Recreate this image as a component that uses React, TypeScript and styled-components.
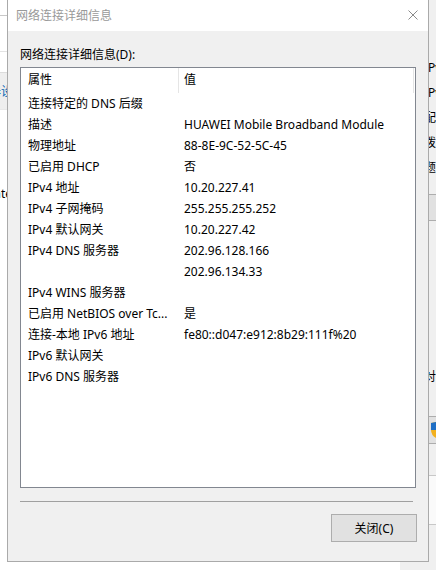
import React from "react";
import styled, { createGlobalStyle } from "styled-components";

const Global = createGlobalStyle`
  html, body { margin: 0; padding: 0; background: #ffffff; }
  body { font-family: "Noto Sans", "Noto Sans CJK SC", sans-serif; font-size: 12px; color: #000; }
`;

const Desktop = styled.div`
  position: relative;
  width: 436px;
  height: 570px;
  overflow: hidden;
  background: #ffffff;
  padding-left: 7px;
  box-sizing: border-box;
`;

/* ---------- background windows (desktop canvas) ---------- */
const LeftWindow = styled.div`
  position: absolute;
  left: -300px;
  top: 0;
  width: 310px;
  height: 570px;
  background: #ffffff;
  display: flex;
  flex-direction: column;
  z-index: 0;
`;

const LwBar = styled.div<{ $h: number; $line: string; $bg?: string }>`
  height: ${(p) => p.$h}px;
  border-bottom: 1px solid ${(p) => p.$line};
  background: ${(p) => p.$bg || "transparent"};
  display: flex;
  align-items: center;
  justify-content: flex-end;
  flex: none;
`;

const LwNav = styled.span`
  color: #0063b1;
  margin-right: -3px;
`;

const LwText = styled.div`
  margin-top: 76px;
  text-align: right;
  margin-right: -2px;
  line-height: 16px;
`;

const RightWindow = styled.div`
  position: absolute;
  left: 400px;
  top: 0;
  width: 200px;
  height: 570px;
  background: #f0f0f0;
  display: flex;
  flex-direction: column;
  padding-top: 60px;
  box-sizing: border-box;
  z-index: 0;
`;

const RwLine = styled.div<{ $mt?: number }>`
  margin-top: ${(p) => p.$mt || 0}px;
  height: 25px;
  line-height: 16px;
  padding-left: 24px;
  white-space: nowrap;
  flex: none;
`;

const RwButton = styled.div<{ $h: number; $mt: number }>`
  margin-top: ${(p) => p.$mt}px;
  height: ${(p) => p.$h}px;
  margin-left: 28px;
  background: #e1e1e1;
  border: 1px solid #adadad;
  display: flex;
  align-items: center;
  padding-left: 2px;
  flex: none;
`;

const RwBox = styled.div`
  margin-top: 31px;
  margin-left: 28px;
  height: 48px;
  background: #fafafa;
  border-top: 1px solid #c8c8c8;
  border-bottom: 1px solid #c8c8c8;
  flex: none;
`;

/* ---------- dialog ---------- */
const Dialog = styled.div`
  position: relative;
  z-index: 1;
  width: 422px;
  height: 562px;
  box-sizing: border-box;
  border: 1px solid #aaaaaa;
  border-top: none;
  background: #f0f0f0;
  display: flex;
  flex-direction: column;
`;

const TitleBar = styled.div`
  height: 31px;
  background: #ffffff;
  display: flex;
  align-items: center;
  justify-content: space-between;
  padding: 0 10px 0 8px;
  flex: none;
`;

const Title = styled.div`
  color: #999999;
  font-size: 12px;
  line-height: 16px;
`;

const CloseX = styled.div`
  width: 10px;
  height: 10px;
  display: flex;
  margin-top: -1px;
`;

const Body = styled.div`
  flex: 1;
  display: flex;
  flex-direction: column;
  padding: 16px 11px 19px 12px;
`;

const Label = styled.div`
  line-height: 16px;
  height: 16px;
  margin-bottom: 4px;
`;

const ListBox = styled.div`
  width: 396px;
  height: 421px;
  box-sizing: border-box;
  border: 1px solid #828790;
  background: #ffffff;
  display: flex;
  flex-direction: column;
  flex: none;
`;

const HeaderRow = styled.div`
  height: 25px;
  display: flex;
  flex: none;
`;

const HeaderCell = styled.div<{ $w: number; $pad: number }>`
  width: ${(p) => p.$w}px;
  padding-left: ${(p) => p.$pad}px;
  box-sizing: border-box;
  border-right: 1px solid #e5e5e5;
  line-height: 24px;
  flex: none;
`;

const Row = styled.div`
  height: 21px;
  display: flex;
  flex: none;
`;

const Cell = styled.div<{ $w?: number; $pad: number }>`
  ${(p) => (p.$w ? `width: ${p.$w}px; flex: none;` : "flex: 1;")}
  padding-left: ${(p) => p.$pad}px;
  box-sizing: border-box;
  line-height: 21px;
  white-space: nowrap;
  overflow: hidden;
`;

const Separator = styled.div`
  margin-top: 13px;
  width: 393px;
  height: 0;
  border-top: 1px solid #a0a0a0;
  flex: none;
`;

const Footer = styled.div`
  margin-top: 12px;
  display: flex;
  justify-content: flex-end;
`;

const Button = styled.button`
  width: 86px;
  height: 28px;
  box-sizing: border-box;
  background: #e1e1e1;
  border: 1px solid #adadad;
  font-family: inherit;
  font-size: 12px;
  color: #000;
  padding: 0;
  margin: 0;
`;

const rows: [string, string][] = [
  ["连接特定的 DNS 后缀", ""],
  ["描述", "HUAWEI Mobile Broadband Module"],
  ["物理地址", "88-8E-9C-52-5C-45"],
  ["已启用 DHCP", "否"],
  ["IPv4 地址", "10.20.227.41"],
  ["IPv4 子网掩码", "255.255.255.252"],
  ["IPv4 默认网关", "10.20.227.42"],
  ["IPv4 DNS 服务器", "202.96.128.166"],
  ["", "202.96.134.33"],
  ["IPv4 WINS 服务器", ""],
  ["已启用 NetBIOS over Tc...", "是"],
  ["连接-本地 IPv6 地址", "fe80::d047:e912:8b29:111f%20"],
  ["IPv6 默认网关", ""],
  ["IPv6 DNS 服务器", ""],
];

export default function App() {
  return (
    <>
      <Global />
      <Desktop>
        <LeftWindow>
          <LwBar $h={15} $line="#c8c8c8" />
          <LwBar $h={35} $line="#e3e3e3" />
          <LwBar $h={20} $line="#dcdcdc" />
          <LwBar $h={36} $line="#e8e8e8" $bg="#eeeeee">
            <LwNav>更改适配器设</LwNav>
          </LwBar>
          <LwText>Ethernet Inte</LwText>
        </LeftWindow>

        <RightWindow>
          <RwLine>IPv4 连接</RwLine>
          <RwLine>IPv6 连接</RwLine>
          <RwLine>配置</RwLine>
          <RwLine>拨号</RwLine>
          <RwLine>题</RwLine>
          <RwButton $h={25} $mt={9} />
          <RwLine $mt={148}>对</RwLine>
          <RwButton $h={26} $mt={22}>
            <svg width="10" height="16" viewBox="0 0 10 16">
              <path d="M0 1 L5 0 L10 1 L10 8 Q10 13 5 16 Q0 13 0 8 Z" fill="#f2b01e" />
              <path d="M5 0 L0 1 L0 8 L5 8 Z" fill="#1f6fc5" />
              <path d="M5 8 L10 8 Q10 13 5 16 Z" fill="#1f6fc5" />
            </svg>
          </RwButton>
          <RwBox />
        </RightWindow>

        <Dialog>
          <TitleBar>
            <Title>网络连接详细信息</Title>
            <CloseX>
              <svg width="10" height="10" viewBox="0 0 10 10">
                <path d="M0.5 0.5 L9.5 9.5 M9.5 0.5 L0.5 9.5" stroke="#8a8a8a" strokeWidth="1" fill="none" />
              </svg>
            </CloseX>
          </TitleBar>
          <Body>
            <Label>网络连接详细信息(D):</Label>
            <ListBox>
              <HeaderRow>
                <HeaderCell $w={158} $pad={7}>属性</HeaderCell>
                <HeaderCell $w={235} $pad={5}>值</HeaderCell>
              </HeaderRow>
              {rows.map(([k, v], i) => (
                <Row key={i}>
                  <Cell $w={158} $pad={7}>{k}</Cell>
                  <Cell $pad={5}>{v}</Cell>
                </Row>
              ))}
            </ListBox>
            <Separator />
            <Footer>
              <Button>关闭(C)</Button>
            </Footer>
          </Body>
        </Dialog>
      </Desktop>
    </>
  );
}
